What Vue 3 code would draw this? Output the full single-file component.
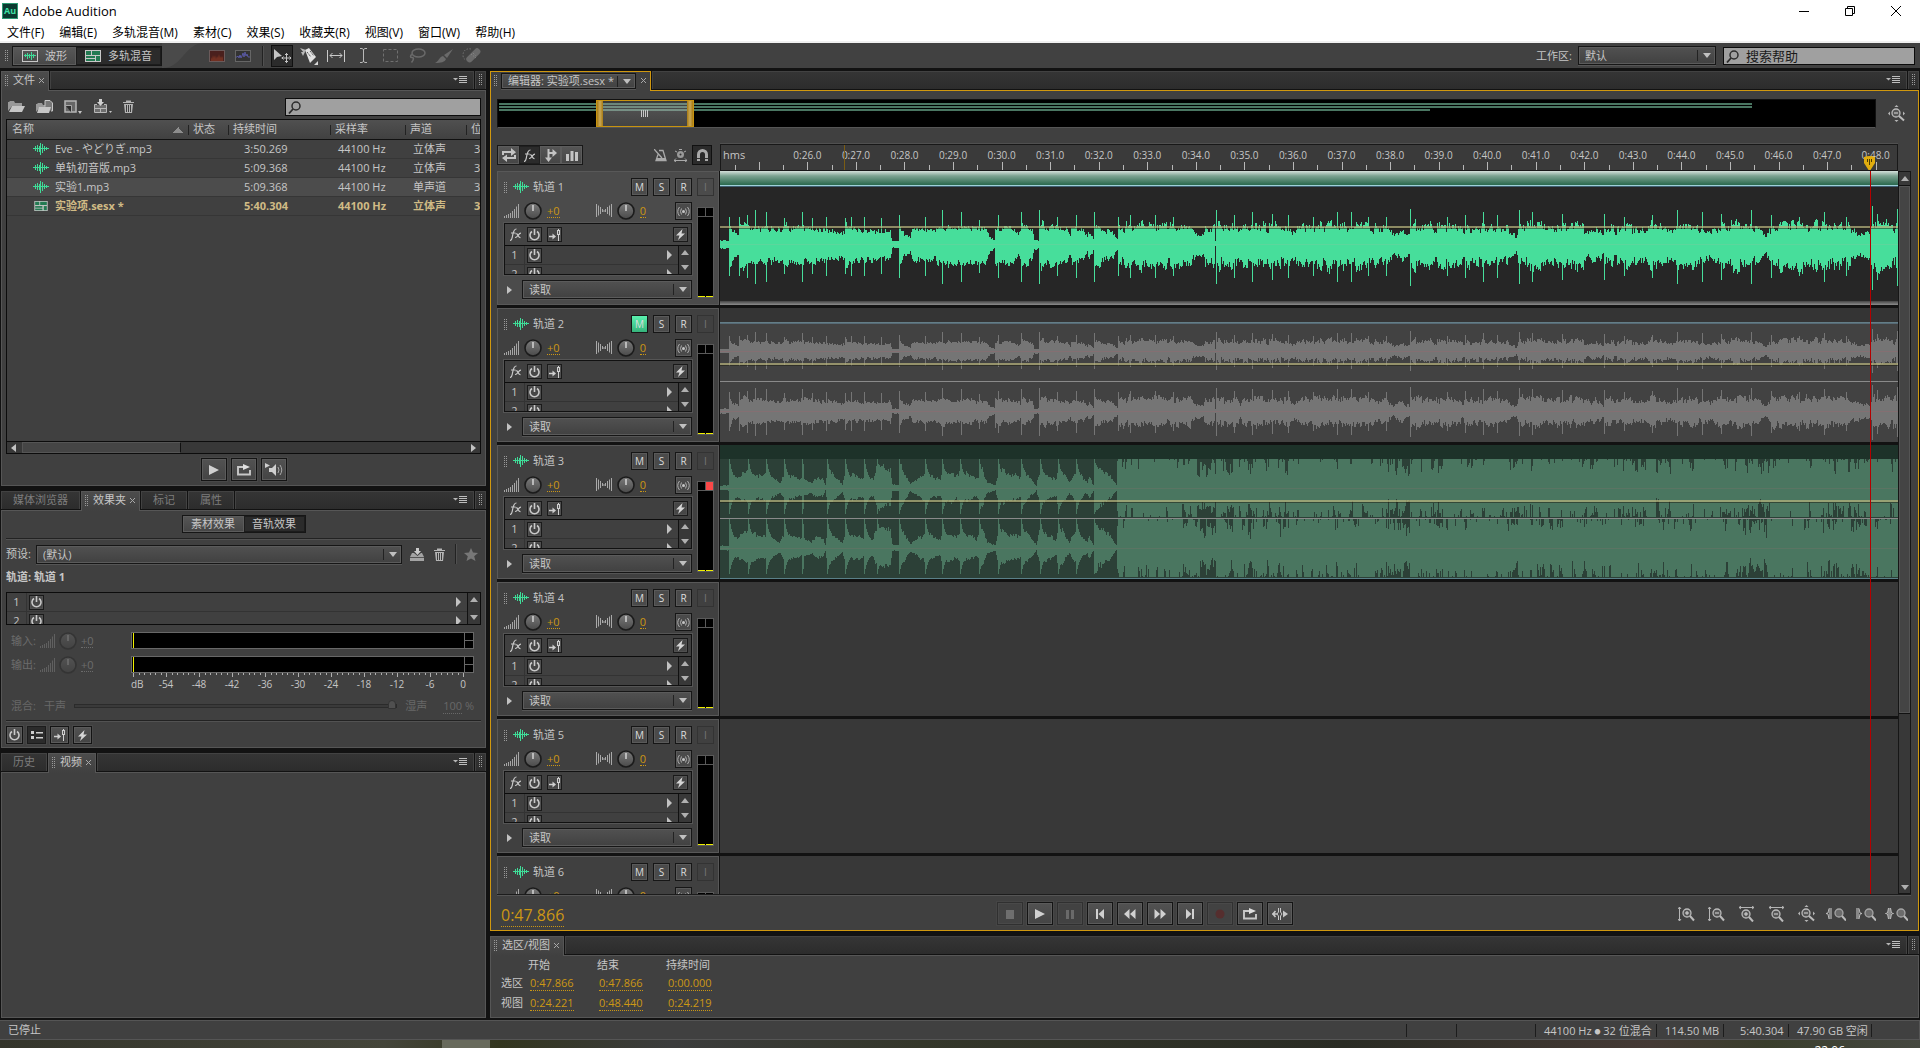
<template>
  <svg class="sprite" aria-hidden="true">
    <symbol id="wave" viewBox="0 0 16 12">
      <path d="M0 5.500h16M2.500 3v5M4.500 2v7M6.500 3v6M7.500 0v12M9.500 1v9M11.500 3v5M13.500 4v3" stroke="#3fdc98" stroke-width="1" fill="none" />
    </symbol>
    <symbol id="wave-box" viewBox="0 0 16 12">
      <rect x=".5" y=".5" width="15" height="11" fill="none" stroke="#c8c8c8" />
      <path d="M2 5.500h12M3.500 4v3M5.500 3v6M7.500 4v4M9.500 2v8M11.500 4v4" stroke="#3fdc98" fill="none" />
    </symbol>
    <symbol id="multi" viewBox="0 0 16 12">
      <rect width="16" height="12" fill="#c8c8c8" />
      <path d="M1 1h5v4H1zM7 1h8v4H7zM1 6h9v2H1zM1 9h9v2H1zM11 6h4v5h-4z" fill="#237a52" />
      <path d="M1 5.500h14M10.500 6v5" stroke="#c8c8c8" />
    </symbol>
    <symbol id="spectral" viewBox="0 0 16 12">
      <rect x=".5" y=".5" width="15" height="11" fill="#4a201d" stroke="#6b5a5a" />
      <path d="M2 11V7l1 2 1-4 1 3 1-3 1 4 1-3 1 2 1-4 1 4 1-2 1 2 1-2v5z" fill="#713022" />
    </symbol>
    <symbol id="pitch" viewBox="0 0 16 12">
      <rect x=".5" y=".5" width="15" height="11" fill="#333" stroke="#666" />
      <path d="M1 7h1l1-1 1 2 1-3 1 3 1-2 1-3 1 4 1-5 1 4 1-2 1 3h2" fill="none" stroke="#5858a0" />
    </symbol>
    <symbol id="move" viewBox="0 0 18 16">
      <path d="M1 1v11l3-3 5-1z" fill="#c4c4c4" />
      <path d="M13.500 5v10M8.500 10h10M12 7l1.500-1.500L15 7M12 13l1.500 1.500L15 13M10.500 8.500L9 10l1.500 1.500M16.500 8.500L18 10l-1.500 1.500" fill="none" stroke="#c4c4c4" />
    </symbol>
    <symbol id="razor" viewBox="0 0 18 18">
      <path d="M5 3l4-2 7 9-6 6z" fill="#e2e2e2" />
      <path d="M0 1l6 2-2 3zM1 5l4 0-2 4z" fill="#b8b8b8" />
      <path d="M7 5l4 5M10 4l4 5" stroke="#555" stroke-dasharray="2 1" />
      <path d="M18 14v4h-4z" fill="#d8d8d8" />
    </symbol>
    <symbol id="timesel" viewBox="0 0 18 12">
      <path d="M.5 0v12M17.500 0v12M3 5.500h12M5.500 3L3 5.500 5.500 8M12.500 3L15 5.500 12.500 8" fill="none" stroke="#cacaca" />
    </symbol>
    <symbol id="ibeam" viewBox="0 0 9 15">
      <path d="M1 .5h2l1.500 1 1.500-1h2M1 14.500h2l1.500-1 1.500 1h2M4.500 1v13" fill="none" stroke="#b8b8b8" />
    </symbol>
    <symbol id="marquee" viewBox="0 0 15 13">
      <rect x=".5" y=".5" width="14" height="12" fill="none" stroke="#707070" stroke-dasharray="3 2" />
    </symbol>
    <symbol id="lasso" viewBox="0 0 17 16">
      <ellipse cx="9.500" cy="5" rx="6.500" ry="4" fill="none" stroke="#6a6a6a" stroke-width="1.500" />
      <path d="M3 6.500c-2 1-2 3 0 3s2 2-.5 5" fill="none" stroke="#6a6a6a" stroke-width="1.500" />
    </symbol>
    <symbol id="brush" viewBox="0 0 18 14">
      <path d="M18 0L9 6l3 3zM8 7l3 3c-1 3-5 4-11 4 4-2 4-6 8-7z" fill="#6a6a6a" />
    </symbol>
    <symbol id="heal" viewBox="0 0 19 17">
      <rect x="8" y="0" width="6.500" height="17" rx="3" transform="rotate(45 11.500 8.500)" fill="#6a6a6a" />
      <path d="M9 7l5 4M11 6l3 3" stroke="#8b8b8b" stroke-dasharray="1 1.500" />
      <path d="M9 2C4 1 1 4 1 8c0 3 1 4 3 5" fill="none" stroke="#6f6f6f" stroke-dasharray="1.500 1.500" />
    </symbol>
    <symbol id="grip" viewBox="0 0 4 11">
      <path d="M.5 0v11M2.500 0v11" stroke="#9a9a9a" stroke-dasharray="1 1" />
    </symbol>
    <symbol id="x" viewBox="0 0 5 5">
      <path d="M0 0l5 5M5 0L0 5" stroke="#a8a8a8" />
    </symbol>
    <symbol id="flyout" viewBox="0 0 14 8">
      <path d="M0 2h5L2.500 4.500z" fill="#b5b5b5" />
      <path d="M6 .5h8M6 2.500h8M6 4.500h8M6 6.500h8" stroke="#bdbdbd" />
    </symbol>
    <symbol id="folder" viewBox="0 0 17 13">
      <path d="M0 11V2h1l1-1h4l1 2h7v3H4z" fill="#999" />
      <path d="M4 6h13l-3 6H1z" fill="#c6c6c6" />
    </symbol>
    <symbol id="folder-doc" viewBox="0 0 17 14">
      <path d="M0 12V4h1l1-1h4l1 2h8v2H4z" fill="#999" />
      <path d="M9 6.500V.5h5L16.500 3v8H15" fill="#777" stroke="#c9c9c9" />
      <path d="M3 7h12l-2 6H1z" fill="#c6c6c6" />
    </symbol>
    <symbol id="newfile" viewBox="0 0 18 14">
      <path d="M1 1h11v11H1z" fill="#666" stroke="#b5b5b5" stroke-width="1.500" />
      <path d="M2 6h5v6z" fill="#2c2c2c" />
      <path d="M2 5.500h5.500V12" fill="none" stroke="#a8a8a8" />
      <path d="M14 11h4l-2 3z" fill="#c4c4c4" />
    </symbol>
    <symbol id="insert" viewBox="0 0 19 15">
      <path d="M2 6h11v8H2z" fill="#6e6e6e" />
      <path d="M4 5.500H1.500v8h12v-8H11M2 9.500h11M7.500 10v4" fill="none" stroke="#b8b8b8" />
      <path d="M6 0h3v3h2L7.500 7 4 3h2z" fill="#d0d0d0" />
      <path d="M16 12h3l-1.500 2z" fill="#c4c4c4" />
    </symbol>
    <symbol id="trash" viewBox="0 0 11 13">
      <path d="M0 3V2h3V.5h5V2h3v1zM1 4h9l-1 9H2z" fill="#b4b4b4" />
      <path d="M3.500 5v7M5.500 5v7M7.500 5v7" stroke="#3c3c3c" />
    </symbol>
    <symbol id="save" viewBox="0 0 14 13">
      <path d="M0 9l2-4h2l3.500 3L11 5h1l2 4v4H0z" fill="#a4a4a4" />
      <path d="M0 9.500h14" stroke="#555" />
      <path d="M6 0h3v3h2L7.500 7 4 3h2z" fill="#cacaca" />
    </symbol>
    <symbol id="star" viewBox="0 0 14 13">
      <path d="M7 0l2 4.500 5 .5-3.800 3.200L11.500 13 7 10.500 2.500 13l1.300-4.800L0 5l5-.5z" fill="#777" />
    </symbol>
    <symbol id="mag" viewBox="0 0 13 13">
      <circle cx="8" cy="5" r="4" fill="none" stroke="#2c2c2c" stroke-width="1.500" />
      <path d="M5 8L1 12.500" stroke="#2c2c2c" stroke-width="1.800" />
    </symbol>
    <symbol id="power" viewBox="0 0 11 12">
      <path d="M3 2.500a4.500 4.500 0 1 0 5 0M5.500 0v6" fill="none" stroke="#c9c9c9" stroke-width="1.600" />
    </symbol>
    <symbol id="route" viewBox="0 0 12 12">
      <path d="M0 7.500h4" stroke="#cfcfcf" stroke-width="1.500" />
      <path d="M3.500 4.500l3.500 3-3.500 3z" fill="#cfcfcf" />
      <path d="M9.500 0v12" stroke="#cfcfcf" />
      <rect x="8.500" y="1.500" width="2" height="4" fill="#555" stroke="#cfcfcf" />
    </symbol>
    <symbol id="bolt" viewBox="0 0 9 11">
      <path d="M6.500 0L0 6.500h3.500L2 11l7-6.500H5.500z" fill="#d6d6d6" />
    </symbol>
    <symbol id="list" viewBox="0 0 12 8">
      <path d="M0 0h3v3H0zM0 5h3v3H0zM5 1h7v1.500H5zM5 6h7v1.500H5z" fill="#cfcfcf" />
    </symbol>
    <symbol id="fx" viewBox="0 0 13 13">
      <path d="M1 12.500c2 0 2-2 2.500-4.500S4.500.8 7.500 1M2 5h4.500" fill="none" stroke="#c9c9c9" stroke-width="1.200" />
      <path d="M6.500 6c3-1.500 2 4 5 3.500M12 5.200C9.500 5 8.500 10 6 9.500" fill="none" stroke="#c9c9c9" stroke-width="1.200" />
    </symbol>
    <symbol id="bars" viewBox="0 0 15 14">
      <path d="M.5 12v2M2.500 11v3M4.500 10v4M6.500 9v5M8.500 7v7M10.500 5v9M12.500 2.500V14M14.500 0v14" stroke="#a5a5a5" />
    </symbol>
    <symbol id="pan" viewBox="0 0 16 14">
      <path d="M.5 0v13M2.500 1.500v10M4.500 3v7M6.500 5v3M8 6v2M9.500 5v3M11.500 3v7M13.500 1.500v10M15.500 0v13" stroke="#a9a9a9" />
    </symbol>
    <symbol id="knob" viewBox="0 0 18 18">
      <circle cx="9" cy="9" r="8" fill="url(#knobfill)" stroke="#1b1b1b" stroke-width="1.600" />
      <path d="M9 3v6" stroke="#eee" stroke-width="1.200" />
    </symbol>
    <linearGradient id="knobfill" x1="0" y1="0" x2="0" y2="1">
      <stop offset="0" stop-color="#7b7b7b" />
      <stop offset="1" stop-color="#4a4a4a" />
    </linearGradient>
    <symbol id="monitor" viewBox="0 0 13 11">
      <circle cx="6.500" cy="5.500" r="1.500" fill="#c4c4c4" />
      <path d="M4.500 2.500Q2.500 5.500 4.500 8.500M8.500 2.500q2 3 0 6M2.500 1q-3.500 4.500 0 9M10.500 1q3.500 4.500 0 9" fill="none" stroke="#b0b0b0" />
    </symbol>
    <symbol id="swap" viewBox="0 0 14 14">
      <path d="M0 3h9V0l5 4.200L9 8V5H2v2H0zM14 11H5v3L0 10l5-3.500V9h7V7h2z" fill="#c4c4c4" />
    </symbol>
    <symbol id="branch" viewBox="0 0 12 13">
      <path d="M3.500 0v10M3.500 4H8" stroke="#c4c4c4" stroke-width="2" />
      <path d="M0 8.500h7L3.500 13zM7.500 0v8L12 4z" fill="#c4c4c4" />
    </symbol>
    <symbol id="eq" viewBox="0 0 12 11">
      <path d="M0 4h3v7H0zM4.500 1h3v10h-3zM9 2h3v9H9z" fill="#c4c4c4" />
    </symbol>
    <symbol id="metro" viewBox="0 0 13 13">
      <path d="M5 1.500h4l3 10H2l2-6M0 0l8 9" fill="none" stroke="#a9a9a9" stroke-width="1.300" />
      <path d="M3 9h8v3H2z" fill="#a9a9a9" />
    </symbol>
    <symbol id="timer" viewBox="0 0 13 13">
      <circle cx="6.500" cy="5.500" r="3.500" fill="#999" />
      <circle cx="6.500" cy="5.500" r="1" fill="#333" />
      <path d="M5 .5h3M1 2l2 1M12 2l-2 1M0 11.500h13M2 9.500l-2 2 2 1.500M11 9.500l2 2-2 1.500" fill="none" stroke="#a9a9a9" />
    </symbol>
    <symbol id="magnet" viewBox="0 0 11 12">
      <path d="M1.500 12V5.500a4 4 0 0 1 8 0V12" fill="none" stroke="#aaa" stroke-width="3" />
      <path d="M0 9.500h3M8 9.500h3" stroke="#333" />
    </symbol>
    <symbol id="play" viewBox="0 0 10 10"><path d="M0 0l10 5-10 5z" fill="#d0d0d0" /></symbol>
    <symbol id="stop" viewBox="0 0 10 10"><path d="M1 1h8v9H1z" fill="#6e6e6e" /></symbol>
    <symbol id="pause" viewBox="0 0 10 10"><path d="M1 1h3v9H1zM6 1h3v9H6z" fill="#6a6a6a" /></symbol>
    <symbol id="prev" viewBox="0 0 10 10"><path d="M1 0h2v10H1zM9 0v10L3.500 5z" fill="#d0d0d0" /></symbol>
    <symbol id="rew" viewBox="0 0 12 10"><path d="M5.500 0v10L0 5zM11.500 0v10L6 5z" fill="#d0d0d0" /></symbol>
    <symbol id="fwd" viewBox="0 0 12 10"><path d="M.5 0v10L6 5zM6.500 0v10L12 5z" fill="#d0d0d0" /></symbol>
    <symbol id="next" viewBox="0 0 10 10"><path d="M7 0h2v10H7zM1 0v10l5.500-5z" fill="#d0d0d0" /></symbol>
    <symbol id="rec" viewBox="0 0 10 10"><circle cx="5" cy="5" r="4.500" fill="#552e2e" /></symbol>
    <symbol id="loop" viewBox="0 0 14 12">
      <path d="M7 3H1v7.500h12V6" fill="none" stroke="#c8c8c8" stroke-width="1.900" />
      <path d="M6 0l7 3-7 3z" fill="#e0e0e0" />
    </symbol>
    <symbol id="skip" viewBox="0 0 16 12">
      <path d="M3.500 3L1 6l2.500 3M0 6h5M11 6h3" fill="none" stroke="#c8c8c8" stroke-width="1.600" />
      <path d="M11 2.500v7L16 6z" fill="#c8c8c8" />
      <path d="M6.500 0v4L5 6l1.500 2v4M8.500 0v4L10 6 8.500 8v4" fill="none" stroke="#c8c8c8" />
    </symbol>
    <symbol id="speaker" viewBox="0 0 18 14">
      <path d="M0 0l5 2.500L0 5zM4 5h3l4-4v12L7 9H4z" fill="#cfcfcf" />
      <path d="M13 4q2 3 0 6M15 2q3.500 5 0 10" fill="none" stroke="#aaa" />
    </symbol>
    <symbol id="zin-v" viewBox="0 0 17 16">
      <path d="M1.500 1v14M0 3l1.500-2L3 3M0 13l1.500 2L3 13" fill="none" stroke="#b5b5b5" />
      <circle cx="9" cy="7" r="4" fill="#555" stroke="#bababa" stroke-width="1.300" />
      <path d="M7 7h4M9 5v4" stroke="#ddd" /><path d="M12 10l4 4.500" stroke="#bababa" stroke-width="2" />
    </symbol>
    <symbol id="zout-v" viewBox="0 0 17 16">
      <path d="M1.500 1v14M0 3l1.500-2L3 3M0 13l1.500 2L3 13" fill="none" stroke="#b5b5b5" />
      <circle cx="9" cy="7" r="4" fill="#555" stroke="#bababa" stroke-width="1.300" />
      <path d="M7 7h4" stroke="#ddd" /><path d="M12 10l4 4.500" stroke="#bababa" stroke-width="2" />
    </symbol>
    <symbol id="zin-h" viewBox="0 0 17 16">
      <path d="M1 1.500h15M3 0L1 1.500 3 3M14 0l2 1.500L14 3" fill="none" stroke="#b5b5b5" />
      <circle cx="8" cy="8" r="4" fill="#555" stroke="#bababa" stroke-width="1.300" />
      <path d="M6 8h4M8 6v4" stroke="#ddd" /><path d="M11 11l4 4.500" stroke="#bababa" stroke-width="2" />
    </symbol>
    <symbol id="zout-h" viewBox="0 0 17 16">
      <path d="M1 1.500h15M3 0L1 1.500 3 3M14 0l2 1.500L14 3" fill="none" stroke="#b5b5b5" />
      <circle cx="8" cy="8" r="4" fill="#555" stroke="#bababa" stroke-width="1.300" />
      <path d="M6 8h4" stroke="#ddd" /><path d="M11 11l4 4.500" stroke="#bababa" stroke-width="2" />
    </symbol>
    <symbol id="zfull" viewBox="0 0 17 17">
      <path d="M6.500 2h4L8.500 0zM6.500 15h4l-2 2zM2 6.500v4L0 8.500zM15 6.500v4l2-2z" fill="#b5b5b5" />
      <circle cx="8" cy="8" r="4" fill="#555" stroke="#bababa" stroke-width="1.300" />
      <path d="M6 8h4" stroke="#ddd" /><path d="M11 11l5 4.500" stroke="#bababa" stroke-width="2" />
    </symbol>
    <symbol id="zsel-in" viewBox="0 0 20 14">
      <path d="M3 1h3v11H3z" fill="#888" /><path d="M3 1.500L2 6l-2 .5L2 7l1 5" fill="none" stroke="#bababa" />
      <circle cx="13" cy="6" r="4" fill="#6c6c6c" stroke="#a5a5a5" stroke-width="1.300" /><path d="M16 9l4 4.500" stroke="#bababa" stroke-width="2" />
    </symbol>
    <symbol id="zsel-out" viewBox="0 0 20 14">
      <path d="M0 1h3v11H0z" fill="#888" /><path d="M3 1.500L4 6l2 .5L4 7l-1 5" fill="none" stroke="#bababa" />
      <circle cx="13" cy="6" r="4" fill="#6c6c6c" stroke="#a5a5a5" stroke-width="1.300" /><path d="M16 9l4 4.500" stroke="#bababa" stroke-width="2" />
    </symbol>
    <symbol id="zsel" viewBox="0 0 23 14">
      <path d="M3 1h3v11H3z" fill="#888" /><path d="M3.500 1L2.500 6l-2 .5 2 .5 1 5M5.500 1l1 5 2 .5-2 .5-1 5" fill="none" stroke="#bababa" />
      <circle cx="16" cy="6" r="4" fill="#6c6c6c" stroke="#a5a5a5" stroke-width="1.300" /><path d="M19 9l4 4.500" stroke="#bababa" stroke-width="2" />
    </symbol>
  </svg>

  <div class="app">
    <header class="titlebar">
      <span class="logo">Au</span>
      <span class="app-name">Adobe Audition</span>
      <div class="window-buttons">
        <button aria-label="最小化"><svg width="10" height="10"><path d="M0 5.500h10" stroke="#000" /></svg></button>
        <button aria-label="还原"><svg width="10" height="10"><path d="M.5 2.500h7v7h-7zM2.500 2V.5h7v7H8" fill="none" stroke="#000" /></svg></button>
        <button aria-label="关闭"><svg width="10" height="10"><path d="M0 0l10 10M10 0L0 10" stroke="#000" /></svg></button>
      </div>
    </header>
    <nav class="menubar">
      <button v-for="item in menus" :key="item">{{ item }}</button>
    </nav>

    <div class="toolbar">
      <svg class="grip"><use href="#grip" /></svg>
      <div class="view-switch">
        <button><svg width="16" height="12"><use href="#wave-box" /></svg>波形</button>
        <button class="pressed"><svg width="16" height="12"><use href="#multi" /></svg>多轨混音</button>
      </div>
      <svg class="swoosh" viewBox="0 0 40 25" preserveAspectRatio="none"><path d="M0 0h40C20 0 20 25 0 25z" fill="#4a4a4a" /></svg>
      <div class="tools dim">
        <button aria-label="频谱"><svg width="16" height="12"><use href="#spectral" /></svg></button>
        <button aria-label="音高"><svg width="16" height="12"><use href="#pitch" /></svg></button>
      </div>
      <i class="vline"></i>
      <div class="tools">
        <button class="pressed" aria-label="移动工具"><svg width="18" height="16"><use href="#move" /></svg></button>
        <button v-for="tool in tools" :key="tool.icon" :aria-label="tool.label"><svg :width="tool.w" :height="tool.h"><use :href="'#' + tool.icon" /></svg></button>
      </div>
      <label class="workspace-label" for="workspace">工作区:</label>
      <div class="select workspace"><select id="workspace"><option>默认</option></select></div>
      <div class="search help">
        <svg width="13" height="13"><use href="#mag" /></svg>
        <input type="text" placeholder="搜索帮助" aria-label="搜索帮助" />
      </div>
    </div>

    <main class="workspace-grid">
      <div class="column">
        <section class="panel files">
          <div class="tabs">
            <button class="tab active"><svg class="grip"><use href="#grip" /></svg>文件<svg class="close"><use href="#x" /></svg></button>
            <div class="strip"><svg width="14" height="8"><use href="#flyout" /></svg></div>
            <div class="strip-end"><svg class="grip"><use href="#grip" /></svg></div>
          </div>
          <div class="body">
            <div class="file-tools">
              <button v-for="tool in fileTools" :key="tool.icon" :aria-label="tool.label"><svg :width="tool.w" :height="tool.h"><use :href="'#' + tool.icon" /></svg></button>
              <div class="search">
                <svg width="13" height="13"><use href="#mag" /></svg>
                <input type="text" aria-label="搜索文件" />
              </div>
            </div>
            <div class="file-box">
              <table>
                <colgroup><col class="c-name" /><col class="c-state" /><col class="c-time" /><col class="c-rate" /><col class="c-chan" /><col /></colgroup>
                <thead>
                  <tr><th class="sorted">名称</th><th>状态</th><th>持续时间</th><th>采样率</th><th>声道</th><th>位</th></tr>
                </thead>
                <tbody>
                  <tr v-for="file in files" :key="file.name" :class="{ selected: file.selected, project: file.project }">
                    <td><svg :width="file.project ? 14 : 16" :height="file.project ? 10 : 12"><use :href="file.project ? '#multi' : '#wave'" /></svg>{{ file.name }}</td>
                    <td></td>
                    <td>{{ file.time }}</td>
                    <td>44100 Hz</td>
                    <td>{{ file.channels }}</td>
                    <td>32</td>
                  </tr>
                </tbody>
              </table>
            </div>
            <div class="hscroll"><i class="tri left"></i><div class="rail"><div class="thumb"></div></div><i class="tri right"></i></div>
            <div class="preview">
              <button class="btn" aria-label="播放"><svg width="10" height="10"><use href="#play" /></svg></button>
              <button class="btn" aria-label="循环"><svg width="14" height="12"><use href="#loop" /></svg></button>
              <button class="btn" aria-label="自动播放"><svg width="18" height="14"><use href="#speaker" /></svg></button>
            </div>
          </div>
        </section>

        <section class="panel rack">
          <div class="tabs">
            <button class="tab">媒体浏览器</button>
            <button class="tab active"><svg class="grip"><use href="#grip" /></svg>效果夹<svg class="close"><use href="#x" /></svg></button>
            <button class="tab">标记</button>
            <button class="tab">属性</button>
            <div class="strip"><svg width="14" height="8"><use href="#flyout" /></svg></div>
            <div class="strip-end"><svg class="grip"><use href="#grip" /></svg></div>
          </div>
          <div class="body">
            <div class="switch"><button>素材效果</button><button class="pressed">音轨效果</button></div>
            <hr />
            <div class="preset">
              <label for="preset">预设:</label>
              <div class="select"><select id="preset"><option>(默认)</option></select></div>
              <button aria-label="保存预设"><svg width="14" height="13"><use href="#save" /></svg></button>
              <button aria-label="删除预设"><svg width="11" height="13"><use href="#trash" /></svg></button>
              <i class="vline"></i>
              <button aria-label="收藏"><svg width="14" height="13"><use href="#star" /></svg></button>
            </div>
            <div class="rack-track">轨道: 轨道 1</div>
            <div class="slots">
              <div class="slot-rows">
                <div class="slot" v-for="n in 2" :key="n"><span>{{ n }}</span><button class="mini" aria-label="开关"><svg width="11" height="12"><use href="#power" /></svg></button><i class="tri right"></i></div>
              </div>
              <div class="vscroll"><i class="tri up"></i><i class="tri down"></i></div>
            </div>
            <div class="level" v-for="label in ['输入:', '输出:']" :key="label">
              <div class="faded">
                <span>{{ label }}</span>
                <svg width="15" height="14"><use href="#bars" /></svg>
                <svg width="18" height="18"><use href="#knob" /></svg>
                <span class="dotted">+0</span>
              </div>
              <div class="meter"><i></i><b></b></div>
            </div>
            <div class="db-scale">
              <i v-for="n in 61" :key="n" :class="{ major: (n - 1) % 6 === 0 }" :style="{ left: (n - 1) / 0.6 + '%' }"></i>
              <span v-for="(db, n) in dbLabels" :key="db" :style="{ left: n * 10 + '%' }">{{ db }}</span>
            </div>
            <div class="mix">
              <label for="mix">混合:</label><span>干声</span>
              <input id="mix" type="range" min="0" max="100" value="100" disabled />
              <span>湿声</span><span class="percent"><u>100</u> %</span>
            </div>
            <hr />
            <div class="rack-buttons">
              <button class="btn" aria-label="电源"><svg width="11" height="12"><use href="#power" /></svg></button>
              <button class="btn pressed" aria-label="列表"><svg width="12" height="8"><use href="#list" /></svg></button>
              <button class="btn" aria-label="推子"><svg width="12" height="12"><use href="#route" /></svg></button>
              <button class="btn" aria-label="预渲染"><svg width="9" height="11"><use href="#bolt" /></svg></button>
            </div>
          </div>
        </section>

        <section class="panel history">
          <div class="tabs">
            <button class="tab">历史</button>
            <button class="tab active"><svg class="grip"><use href="#grip" /></svg>视频<svg class="close"><use href="#x" /></svg></button>
            <div class="strip"><svg width="14" height="8"><use href="#flyout" /></svg></div>
            <div class="strip-end"><svg class="grip"><use href="#grip" /></svg></div>
          </div>
          <div class="body"></div>
        </section>
      </div>

      <div class="column">
        <section class="panel editor">
          <div class="tabs">
            <div class="tab active">
              <svg class="grip"><use href="#grip" /></svg>
              <div class="select"><select aria-label="编辑器"><option>编辑器: 实验项.sesx *</option></select></div>
              <svg class="close"><use href="#x" /></svg>
            </div>
            <div class="strip"><svg width="14" height="8"><use href="#flyout" /></svg></div>
            <div class="strip-end"><svg class="grip"><use href="#grip" /></svg></div>
          </div>
          <div class="body">
            <div class="overview-row">
              <div class="overview">
                <i class="clip-line" v-for="(w, n) in overviewClips" :key="n" :style="{ width: w + '%' }"></i>
                <div class="view-window"><i></i><span></span><i></i></div>
              </div>
              <button aria-label="全部缩小"><svg width="17" height="17"><use href="#zfull" /></svg></button>
            </div>

            <div class="time-row">
              <div class="track-tools">
                <div class="joined">
                  <button aria-label="输入输出"><svg width="14" height="14"><use href="#swap" /></svg></button>
                  <button class="pressed" aria-label="效果"><svg width="13" height="13"><use href="#fx" /></svg></button>
                  <button aria-label="发送"><svg width="12" height="13"><use href="#branch" /></svg></button>
                  <button aria-label="均衡"><svg width="12" height="11"><use href="#eq" /></svg></button>
                </div>
                <button class="plain" aria-label="节拍器"><svg width="13" height="13"><use href="#metro" /></svg></button>
                <button class="plain" aria-label="计时"><svg width="13" height="13"><use href="#timer" /></svg></button>
                <button class="plain pressed" aria-label="吸附"><svg width="11" height="12"><use href="#magnet" /></svg></button>
              </div>
              <div class="ruler">
                <span class="unit">hms</span>
                <template v-for="tick in ticks" :key="tick.t">
                  <i :class="{ major: tick.major }" :style="{ left: tick.left + '%' }"></i>
                  <span v-if="tick.label" :style="{ left: tick.left + '%' }">{{ tick.label }}</span>
                </template>
                <b class="hover-mark"></b>
                <svg class="marker" viewBox="0 0 11 14"><path d="M0 1q5.500-2 11 0v6l-4.500 7h-2L0 7z" fill="#e0ac0e" /><path d="M3.500 3v3M5.500 3v6M7.500 3v3" stroke="#4a3a00" /></svg>
              </div>
            </div>

            <div class="session">
              <div class="tracks">
                <div class="track" v-for="track in tracks" :key="track.id" :class="{ current: track.id === 1 }">
                  <div class="head">
                    <div class="controls">
                      <div class="line title">
                        <svg class="grip"><use href="#grip" /></svg>
                        <svg width="16" height="12"><use href="#wave" /></svg>
                        <span class="name">轨道 {{ track.id }}</span>
                        <button class="key" :class="{ muted: track.muted }">M</button>
                        <button class="key">S</button>
                        <button class="key">R</button>
                      </div>
                      <div class="line dials">
                        <svg width="15" height="14"><use href="#bars" /></svg>
                        <svg width="18" height="18"><use href="#knob" /></svg>
                        <span class="value volume">+0</span>
                        <svg width="16" height="14"><use href="#pan" /></svg>
                        <svg width="18" height="18"><use href="#knob" /></svg>
                        <span class="value">0</span>
                        <button class="key" aria-label="监听"><svg width="13" height="11"><use href="#monitor" /></svg></button>
                      </div>
                      <div class="fx-box">
                        <div class="fx-row">
                          <svg width="13" height="13"><use href="#fx" /></svg>
                          <button class="mini" aria-label="开关"><svg width="11" height="12"><use href="#power" /></svg></button>
                          <button class="mini" aria-label="推子"><svg width="12" height="12"><use href="#route" /></svg></button>
                          <button class="mini last" aria-label="预渲染"><svg width="9" height="11"><use href="#bolt" /></svg></button>
                        </div>
                        <div class="slots">
                          <div class="slot-rows">
                            <div class="slot" v-for="n in 2" :key="n"><span>{{ n }}</span><button class="mini" aria-label="开关"><svg width="11" height="12"><use href="#power" /></svg></button><i class="tri right"></i></div>
                          </div>
                          <div class="vscroll"><i class="tri up"></i><i class="tri down"></i></div>
                        </div>
                      </div>
                      <div class="line mode">
                        <i class="tri right"></i>
                        <div class="select"><select :aria-label="'轨道 ' + track.id + ' 自动化'"><option>读取</option></select></div>
                      </div>
                    </div>
                    <div class="side">
                      <button class="key off">I</button>
                      <div class="vu"><div class="clip-leds"><i></i><i :class="{ hot: track.clipped }"></i></div><div class="floor"><i></i><i></i></div></div>
                    </div>
                  </div>
                  <div class="lane" :class="track.kind">
                    <svg v-if="track.waves" viewBox="0 0 1178 134" preserveAspectRatio="none" shape-rendering="crispEdges">
                      <g v-for="(wave, n) in track.waves" :key="n">
                        <path :d="wave.d" :fill="track.color" />
                        <path :d="`M0 ${wave.mid}.5H1178`" :stroke="track.axis" />
                      </g>
                      <path v-if="track.split" :d="`M0 ${track.split}.5H1178`" stroke="#8a8a8a" />
                      <rect x="0" :y="track.volume" width="1178" height="2" fill="#b5b27b" fill-opacity=".72" />
                      <rect x="0" :y="track.volume + 2" width="1178" height="1" fill="#1c1c10" fill-opacity=".5" />
                    </svg>
                  </div>
                </div>
                <div class="playhead-area"><i></i></div>
              </div>
              <div class="track-scroll"><i class="tri up"></i><div class="thumb"></div><div class="rest"></div><i class="tri down"></i></div>
            </div>

            <div class="footer">
              <div class="clock"><span>0:47.866</span></div>
              <div class="transport">
                <button v-for="b in transport" :key="b.icon" class="btn" :disabled="b.off" :aria-label="b.label"><svg :width="b.w" :height="b.h"><use :href="'#' + b.icon" /></svg></button>
              </div>
              <div class="zooms">
                <button v-for="z in zooms" :key="z.icon" :aria-label="z.label"><svg :width="z.w" :height="z.h"><use :href="'#' + z.icon" /></svg></button>
              </div>
            </div>
          </div>
        </section>

        <section class="panel selection">
          <div class="tabs">
            <button class="tab active"><svg class="grip"><use href="#grip" /></svg>选区/视图<svg class="close"><use href="#x" /></svg></button>
            <div class="strip"><svg width="14" height="8"><use href="#flyout" /></svg></div>
            <div class="strip-end"><svg class="grip"><use href="#grip" /></svg></div>
          </div>
          <div class="body">
            <table>
              <thead><tr><th></th><th>开始</th><th>结束</th><th>持续时间</th></tr></thead>
              <tbody>
                <tr v-for="row in ranges" :key="row.label">
                  <th>{{ row.label }}</th>
                  <td v-for="(v, n) in row.values" :key="n"><span>{{ v }}</span></td>
                </tr>
              </tbody>
            </table>
          </div>
        </section>
      </div>
    </main>

    <footer class="statusbar">
      <span class="state">已停止</span>
      <span class="cell gap-a"></span>
      <span class="cell gap-b"></span>
      <span class="cell rate">44100 Hz <small>●</small> 32 位混合</span>
      <span class="cell size">114.50 MB</span>
      <span class="cell length">5:40.304</span>
      <span class="cell free">47.90 GB 空闲</span>
      <span class="cell tail"></span>
    </footer>
    <div class="taskbar"><i class="task"></i><span>22:06</span></div>
  </div>
</template>

<script setup>
const menus = ['文件(F)', '编辑(E)', '多轨混音(M)', '素材(C)', '效果(S)', '收藏夹(R)', '视图(V)', '窗口(W)', '帮助(H)']

const tools = [
  { icon: 'razor', label: '切割', w: 18, h: 18 },
  { icon: 'timesel', label: '时间选区', w: 18, h: 12 },
  { icon: 'ibeam', label: '选区', w: 9, h: 15 },
  { icon: 'marquee', label: '框选', w: 15, h: 13 },
  { icon: 'lasso', label: '套索', w: 17, h: 16 },
  { icon: 'brush', label: '画笔', w: 18, h: 14 },
  { icon: 'heal', label: '修复', w: 19, h: 17 }
]

const fileTools = [
  { icon: 'folder', label: '打开', w: 17, h: 13 },
  { icon: 'folder-doc', label: '导入', w: 17, h: 14 },
  { icon: 'newfile', label: '新建', w: 18, h: 14 },
  { icon: 'insert', label: '插入', w: 19, h: 15 },
  { icon: 'trash', label: '删除', w: 11, h: 13 }
]

const files = [
  { name: 'Eve - やどりぎ.mp3', time: '3:50.269', channels: '立体声' },
  { name: '单轨初音版.mp3', time: '5:09.368', channels: '立体声' },
  { name: '实验1.mp3', time: '5:09.368', channels: '单声道', selected: true },
  { name: '实验项.sesx *', time: '5:40.304', channels: '立体声', project: true }
]

const dbLabels = ['dB', '-54', '-48', '-42', '-36', '-30', '-24', '-18', '-12', '-6', '0']

const overviewClips = [91.1, 91.1, 67.7]

const transport = [
  { icon: 'stop', label: '停止', w: 10, h: 10, off: true },
  { icon: 'play', label: '播放', w: 10, h: 10 },
  { icon: 'pause', label: '暂停', w: 10, h: 10, off: true },
  { icon: 'prev', label: '上一个', w: 10, h: 10 },
  { icon: 'rew', label: '快退', w: 12, h: 10 },
  { icon: 'fwd', label: '快进', w: 12, h: 10 },
  { icon: 'next', label: '下一个', w: 10, h: 10 },
  { icon: 'rec', label: '录音', w: 10, h: 10, off: true },
  { icon: 'loop', label: '循环', w: 14, h: 12 },
  { icon: 'skip', label: '跳过选区', w: 16, h: 12 }
]

const zooms = [
  { icon: 'zin-v', label: '放大振幅', w: 17, h: 16 },
  { icon: 'zout-v', label: '缩小振幅', w: 17, h: 16 },
  { icon: 'zin-h', label: '放大时间', w: 17, h: 16 },
  { icon: 'zout-h', label: '缩小时间', w: 17, h: 16 },
  { icon: 'zfull', label: '完全缩小', w: 17, h: 17 },
  { icon: 'zsel-in', label: '放大入点', w: 20, h: 14 },
  { icon: 'zsel-out', label: '放大出点', w: 20, h: 14 },
  { icon: 'zsel', label: '缩放到选区', w: 23, h: 14 }
]

const ranges = [
  { label: '选区', values: ['0:47.866', '0:47.866', '0:00.000'] },
  { label: '视图', values: ['0:24.221', '0:48.440', '0:24.219'] }
]

// visible time range, in seconds
const viewStart = 24.221
const viewLength = 24.219

const ticks = []
for (let t = 25; t <= 48; t++) {
  ticks.push({ t, major: true, left: ((t - viewStart) / viewLength) * 100, label: t > 25 ? `0:${t}.0` : '' })
}
for (let t = 24.5; t < 48.4; t++) {
  ticks.push({ t, major: false, left: ((t - viewStart) / viewLength) * 100 })
}

// loudness curve of the song: [x, level]
const song = [
  [0, 0.2], [8, 0.22], [9, 1.2], [12, 0.8], [18, 0.55], [19, 1.2], [40, 1.05], [52, 0.9], [60, 0.9], [64, 1.1], [80, 1.05],
  [92, 1], [105, 0.9], [118, 0.85], [124, 0.7], [125, 1.1], [130, 0.95], [150, 0.85], [160, 0.75], [170, 0.9], [172, 0.22],
  [178, 0.22], [179, 1.3], [184, 0.7], [190, 0.45], [192, 0.95], [215, 0.85], [222, 1.1], [250, 0.95], [267, 0.9], [270, 0.4],
  [274, 0.25], [275, 1.15], [290, 0.95], [300, 0.75], [301, 1.2], [312, 0.9], [314, 0.25], [318, 0.22], [319, 1.25],
  [335, 1.05], [348, 0.9], [350, 0.7], [352, 1.1], [363, 0.9], [367, 0.4], [369, 0.9], [373, 0.3], [374, 1.2], [385, 0.9],
  [393, 0.8], [397, 0.35], [398, 1.2], [470, 1.1], [475, 0.6], [483, 0.5], [485, 1.1], [494, 1], [495, 0.2], [496, 1.15],
  [517, 1], [520, 0.7], [523, 1.1], [555, 1.1], [557, 0.85], [560, 1.1], [568, 1], [574, 0.75], [585, 1.15], [625, 1.15],
  [628, 0.85], [631, 1.2], [664, 1], [674, 0.5], [680, 0.85], [689, 0.5], [690, 1.2], [738, 1.1], [743, 0.8], [748, 1.1],
  [787, 1], [790, 0.65], [796, 0.5], [799, 1.2], [838, 1.1], [840, 0.85], [843, 1.2], [862, 1.1], [870, 0.75], [875, 1],
  [883, 0.5], [884, 1.15], [900, 0.85], [905, 1.1], [925, 0.8], [932, 1.2], [945, 1], [952, 0.75], [957, 1.2], [990, 0.9],
  [1000, 1.2], [1020, 1.2], [1035, 1], [1046, 0.5], [1051, 1.2], [1110, 1.15], [1130, 1], [1140, 0.6], [1150, 0.75], [1152, 1.3], [1178, 1.1]
]
const songHits = [
  [9, 1.7], [19, 1.7], [27, 1.8], [35, 2.1], [46, 2], [64, 1.6], [82, 2], [92, 1.6], [106, 1.7], [125, 1.6], [131, 1.7], [144, 1.7],
  [161, 1.6], [179, 1.8], [205, 1.7], [222, 2.1], [241, 2], [259, 1.5], [278, 1.8], [301, 2], [319, 2.1], [337, 1.7], [356, 1.8],
  [374, 2], [398, 1.7], [410, 1.8], [435, 1.8], [453, 1.7], [496, 2.1], [514, 1.8], [532, 2], [552, 1.9], [568, 1.8], [593, 1.7],
  [617, 2], [631, 2], [648, 1.7], [666, 1.7], [690, 2.2], [727, 1.7], [745, 1.8], [763, 2], [777, 1.8], [799, 2.1], [812, 2],
  [842, 1.9], [884, 1.9], [904, 1.7], [932, 1.8], [957, 2.1], [982, 2], [1001, 1.9], [1031, 2.1], [1051, 1.8], [1079, 1.7],
  [1104, 2], [1126, 1.7], [1152, 2.4], [1157, 1.9], [1177, 2.2]
]

// backing track: long decays first, then saturated
const backing = [
  [0, 0.08], [8, 0.1], [9, 0.55], [18, 0.4], [28, 0.65], [42, 0.35], [46, 0.5], [60, 0.2], [64, 0.5], [78, 0.35], [88, 0.25],
  [91, 0.2], [98, 0.4], [103, 0.3], [105, 0.1], [107, 0.7], [122, 0.15], [125, 0.5], [140, 0.4], [153, 0.3], [157, 0.8],
  [170, 0.6], [172, 0.12], [178, 0.1], [179, 0.8], [190, 0.15], [205, 0.5], [220, 0.3], [222, 0.65], [238, 0.4], [240, 0.6],
  [256, 0.3], [262, 0.7], [267, 0.2], [275, 0.1], [278, 0.6], [300, 0.4], [301, 0.75], [316, 0.1], [319, 0.6], [336, 0.3],
  [338, 0.8], [349, 0.2], [356, 0.6], [367, 0.2], [369, 0.4], [373, 0.1], [374, 0.9], [390, 0.4], [396, 0.1], [398, 1.5],
  [460, 1.4], [464, 0.95], [475, 1.1], [483, 0.7], [494, 0.8], [495, 0.4], [496, 1.5], [512, 0.8], [515, 1.5], [530, 0.7],
  [532, 1.3], [568, 1], [569, 1.5], [665, 1.3], [674, 0.8], [680, 1], [689, 0.5], [690, 1.5], [720, 1.2], [760, 1.5], [789, 1.3], [797, 0.7],
  [799, 1.5], [830, 1.2], [850, 1.5], [872, 1], [884, 1.5], [920, 1.2], [952, 1], [957, 1.5], [1000, 1.2], [1046, 0.8], [1051, 1.5],
  [1100, 1.3], [1140, 0.9], [1152, 1.5], [1178, 1.3]
]
const backingHits = [9, 28, 46, 64, 82, 107, 125, 144, 157, 179, 205, 222, 240, 259, 278, 301, 320, 338, 356, 374].map((x) => [x, 1])

function random(n) {
  const v = Math.sin(n * 127.1 + 11.7) * 43758.5453
  return v - Math.floor(v)
}

function levelAt(points, x) {
  let i = 1
  while (i < points.length - 1 && points[i][0] < x) i++
  const [x0, y0] = points[i - 1]
  const [x1, y1] = points[i]
  return y0 + ((y1 - y0) * (x - x0)) / (x1 - x0)
}

function buildWave({ points, hits, mid, up, down, limit, seed, fade, rough, lateRough }) {
  let d = ''
  for (let x = 0; x < 1178; x++) {
    const base = levelAt(points, x)
    const noise = x < 398 ? rough : lateRough
    let hit = 0
    for (const [at, size] of hits) {
      if (x >= at && x < at + 20) hit = Math.max(hit, size * Math.exp((at - x) / fade))
    }
    const slow = random(Math.floor(x / 3) + seed * 7) - 0.5
    const size = (n) => Math.max(base * (1 + noise * (random(x * 2 + n + seed) - 0.6 + slow)), base < 0.3 ? 0 : hit)
    const top = Math.min(limit, Math.max(2, Math.round(size(0) * up)))
    const bottom = Math.min(limit, Math.max(2, Math.round(size(1) * down)))
    d += `M${x} ${mid - top}h1v${top + bottom}h-1z`
  }
  return { d, mid }
}

const vocal = { points: song, hits: songHits, limit: 60, fade: 1.2, rough: 0.3, lateRough: 0.4 }
const band = { points: backing, hits: backingHits, up: 29, down: 26, limit: 29, fade: 5, rough: 0.25, lateRough: 0.6 }

const tracks = [
  {
    id: 1, kind: 'active', color: '#47de9b', axis: '#5cd69c', volume: 55,
    waves: [buildWave({ ...vocal, mid: 73, up: 16, down: 19, seed: 1 })]
  },
  {
    id: 2, kind: 'gray', muted: true, color: '#757575', axis: '#846f72', volume: 55, split: 73,
    waves: [buildWave({ ...vocal, mid: 43, up: 9, down: 9, seed: 1 }), buildWave({ ...vocal, mid: 103, up: 11, down: 12, seed: 3 })]
  },
  {
    id: 3, kind: 'green', clipped: true, color: '#4a7660', axis: '#5b7463', volume: 55, split: 73,
    waves: [buildWave({ ...band, mid: 43, seed: 5 }), buildWave({ ...band, mid: 103, seed: 9 })]
  },
  { id: 4 },
  { id: 5 },
  { id: 6 }
]
</script>

<style>
body {
  margin: 0;
  background: #121212;
}
</style>

<style scoped>
.sprite {
  position: absolute;
  width: 0;
  height: 0;
}

.app {
  display: flex;
  flex-direction: column;
  height: 100vh;
  overflow: hidden;
  background: #121212;
  color: #c6c6c6;
  font: 11px/16px "Open Sans", "Noto Sans CJK SC", sans-serif;
}

.app * {
  box-sizing: border-box;
}

svg {
  display: block;
  flex: none;
}

button,
select,
input {
  margin: 0;
  padding: 0;
  border: 0;
  background: none;
  color: inherit;
  font: inherit;
}

button {
  display: flex;
  align-items: center;
  justify-content: center;
  flex: none;
}

hr {
  height: 2px;
  margin: 0;
  border: 0;
  border-top: 1px solid #222;
  border-bottom: 1px solid #525252;
}

/* window chrome */
.titlebar {
  display: flex;
  align-items: center;
  height: 21px;
  padding: 1px 1px 0 2px;
  background: #fff;
  color: #000;
  font-size: 13px;
}

.logo {
  width: 16px;
  height: 16px;
  margin-right: 5px;
  border: 1px solid #2c9a73;
  background: #0b3a30;
  color: #3fe0a5;
  font-size: 9px;
  font-weight: 700;
  line-height: 13px;
  text-align: center;
}

.window-buttons {
  display: flex;
  margin-left: auto;
}

.window-buttons button {
  width: 46px;
  height: 20px;
}

.menubar {
  display: flex;
  gap: 1px;
  height: 22px;
  border-bottom: 2px solid #f0f0f0;
  background: #fff;
  color: #000;
  font-size: 12px;
}

.menubar button {
  padding: 4px 7px 0;
}

/* toolbar */
.toolbar {
  display: flex;
  align-items: center;
  height: 25px;
  margin-bottom: 3px;
  padding: 0 5px;
  background: #414141;
}

.grip {
  width: 4px;
  height: 11px;
}

.toolbar .grip {
  margin-right: 3px;
}

.view-switch {
  display: flex;
  height: 20px;
  border: 1px solid #161616;
}

.view-switch button {
  width: 63px;
  gap: 7px;
  border: 1px solid #5c5c5c;
  background: linear-gradient(#575757, #484848);
}

.view-switch button.pressed {
  width: 85px;
}

button.pressed {
  border-color: #1c1c1c;
  background: #2b2b2b;
}

.swoosh {
  width: 43px;
  height: 25px;
}

.tools {
  display: flex;
  align-items: center;
  gap: 3px;
}

.tools button {
  width: 24px;
  height: 22px;
}

.tools .pressed {
  width: 22px;
  margin-right: 1px;
  border: 1px solid #111;
}

.tools.dim {
  gap: 2px;
  margin-right: 7px;
}

.vline {
  width: 2px;
  height: 20px;
  margin-right: 7px;
  border-left: 1px solid #222;
  border-right: 1px solid #505050;
}

.workspace-label {
  margin-left: auto;
  margin-right: 6px;
}

.select {
  position: relative;
  height: 19px;
  border: 1px solid #161616;
  box-shadow: 0 1px 0 #555;
  background: linear-gradient(#515151, #414141);
}

.select select {
  display: block;
  width: 100%;
  height: 17px;
  padding: 0 20px 0 5px;
  border: 1px solid #5b5b5b;
  appearance: none;
  line-height: 15px;
}

.select::before {
  content: "";
  position: absolute;
  top: 3px;
  right: 17px;
  height: 11px;
  border-left: 1px solid #222;
}

.select::after {
  content: "";
  position: absolute;
  top: 6px;
  right: 4px;
  border: 4px solid transparent;
  border-top: 5px solid #c0c0c0;
  border-bottom: 0;
}

.select.workspace {
  width: 138px;
  margin-right: 7px;
}

.search {
  position: relative;
  height: 18px;
}

.search svg {
  position: absolute;
  top: 3px;
  left: 3px;
}

.search input {
  display: block;
  width: 100%;
  height: 18px;
  padding-left: 22px;
  border: 1px solid #0c0c0c;
  background: #a0a0a0;
}

.search.help {
  width: 192px;
  font-size: 13px;
}

.search input::placeholder {
  color: #1a1a1a;
}

/* panels */
.workspace-grid {
  display: grid;
  grid-template-columns: 485px minmax(0, 1fr);
  flex: 1;
  gap: 4px;
  min-height: 0;
  padding: 0 1px;
}

.column {
  display: flex;
  flex-direction: column;
  gap: 5px;
  min-width: 0;
  min-height: 0;
}

.panel {
  display: flex;
  flex-direction: column;
  min-height: 0;
}

.files {
  flex: 416 1 0;
}

.history {
  flex: 265 1 0;
}

.editor {
  flex: 1;
}

.tabs {
  display: flex;
  gap: 1px;
  flex: none;
  height: 19px;
}

.tab {
  position: relative;
  height: 18px;
  padding: 0 11px 2px;
  border: 1px solid #424242;
  border-bottom: 0;
  background: linear-gradient(#353535, #2c2c2c);
  color: #7d7d7d;
}

.tab.active {
  z-index: 1;
  gap: 4px;
  height: 20px;
  padding: 0 4px 3px 3px;
  border-color: #565656;
  background: linear-gradient(#4c4c4c, #404040);
  color: #c6c6c6;
}

.close {
  width: 5px;
  height: 5px;
}

.strip,
.strip-end {
  display: flex;
  align-items: center;
  justify-content: flex-end;
  height: 18px;
  padding-bottom: 2px;
  border: 1px solid #424242;
  border-bottom: 0;
  background: linear-gradient(#353535, #2c2c2c);
}

.strip {
  flex: 1;
  padding-right: 6px;
}

.strip-end {
  justify-content: center;
  width: 11px;
}

.body {
  display: flex;
  flex-direction: column;
  flex: 1;
  min-height: 0;
  border: 1px solid #565656;
  background: #404040;
}

/* file list */
.files .body {
  padding: 5px 4px 3px;
}

.file-tools {
  display: flex;
  align-items: center;
  gap: 11px;
  height: 21px;
  margin-bottom: 2px;
  padding-left: 2px;
}

.file-tools .search {
  width: 196px;
  margin-left: auto;
}

.file-box {
  flex: 1;
  overflow: hidden;
  border: 1px solid #0c0c0c;
  border-bottom: 0;
}

.file-box table {
  width: 100%;
  table-layout: fixed;
  border-collapse: collapse;
  white-space: nowrap;
}

.c-name {
  width: 181px;
}

.c-state {
  width: 40px;
}

.c-time {
  width: 102px;
}

.c-rate {
  width: 75px;
}

.c-chan {
  width: 61px;
}

.file-box th {
  height: 19px;
  padding: 0 0 0 5px;
  border-bottom: 1px solid #111;
  background: linear-gradient(#505050, #414141);
  font-weight: 400;
  text-align: left;
  overflow: hidden;
}

.file-box th + th {
  background: linear-gradient(#222, #222) 0 5px / 1px 10px no-repeat, linear-gradient(#505050, #414141);
}

.file-box th.sorted {
  background: conic-gradient(from 135deg at 50% 0, #8d8d8d 90deg, transparent 0) 165px 7px / 12px 6px no-repeat, linear-gradient(#505050, #414141);
}

.file-box td {
  height: 19px;
  padding: 0 0 0 8px;
  border-bottom: 1px solid #363636;
  overflow: hidden;
}

.file-box td:first-child {
  padding-left: 26px;
}

.file-box td:nth-child(3) {
  padding-left: 16px;
}

.file-box td svg {
  display: inline-block;
  margin-right: 6px;
  vertical-align: -2px;
}

.file-box .project td svg {
  margin: 0 7px 0 1px;
  vertical-align: -1px;
}

.file-box .selected td {
  background: #4c4c4c;
}

.file-box .project td {
  color: #d0bb85;
  font-weight: 700;
}

.hscroll {
  display: flex;
  align-items: center;
  justify-content: space-between;
  height: 13px;
  padding: 0 4px;
  border: 1px solid #0c0c0c;
  background: #383838;
}

.rail {
  flex: 1;
  margin: 0 6px;
}

.hscroll .thumb {
  width: 36%;
  height: 11px;
  border: 1px solid #555;
  border-right-color: #111;
  background: #454545;
}

.tri {
  flex: none;
  width: 0;
  height: 0;
  border: 4px solid transparent;
}

.tri.left {
  border-right: 5px solid #c2c2c2;
  border-left: 0;
}

.tri.right {
  border-left: 5px solid #c2c2c2;
  border-right: 0;
}

.tri.up {
  border-bottom: 5px solid #b0b0b0;
  border-top: 0;
}

.tri.down {
  border-top: 5px solid #b0b0b0;
  border-bottom: 0;
}

.preview {
  display: flex;
  justify-content: center;
  gap: 4px;
  padding: 4px 0 1px;
}

.btn {
  width: 26px;
  height: 23px;
  border: 1px solid #141414;
  box-shadow: inset 0 0 0 1px #5b5b5b, 0 0 0 1px #484848;
  background: linear-gradient(#525252, #444);
}

.btn.pressed {
  box-shadow: 0 0 0 1px #484848;
  background: #2b2b2b;
}

.btn:disabled {
  border-color: #303030;
  box-shadow: inset 0 0 0 1px #494949, 0 0 0 1px #454545;
  background: #424242;
}

/* effects rack */
.rack .body {
  padding: 4px 4px 3px;
}

.switch {
  display: flex;
  align-self: center;
  height: 18px;
  margin-bottom: 5px;
  border: 1px solid #161616;
}

.switch button {
  width: 61px;
  border: 1px solid #5c5c5c;
  background: linear-gradient(#555, #464646);
}

.switch .pressed {
  border-color: #1c1c1c;
  background: #2b2b2b;
}

.preset {
  display: flex;
  align-items: center;
  margin: 4px 0 5px;
}

.preset .select {
  flex: 1;
  margin: 0 8px 0 5px;
}

.preset button {
  margin-right: 10px;
}

.preset button:last-child {
  margin-right: 3px;
}

.rack-track {
  margin-bottom: 7px;
  font-weight: 700;
}

.slots {
  display: flex;
  height: 33px;
  border: 1px solid #0c0c0c;
  overflow: hidden;
}

.slot-rows {
  flex: 1;
  height: 100%;
  overflow: hidden;
}

.slot {
  display: flex;
  align-items: center;
  height: 19px;
  padding-right: 6px;
  border-bottom: 1px solid #333;
}

.slot > span {
  width: 20px;
  height: 18px;
  margin-right: 2px;
  border-right: 1px solid #333;
  line-height: 18px;
  text-align: center;
}

.slot .tri {
  margin-left: auto;
}

.slot .tri.right {
  border-width: 5px 0 5px 5px;
}

.mini {
  width: 15px;
  height: 15px;
  border: 1px solid #1a1a1a;
  box-shadow: inset 0 0 0 1px #505050;
  background: #464646;
}

.vscroll {
  display: flex;
  flex-direction: column;
  align-items: center;
  justify-content: space-between;
  width: 13px;
  padding: 4px 0;
  border-left: 1px solid #111;
  background: #383838;
}

.level {
  display: flex;
  align-items: center;
  height: 17px;
  margin-top: 7px;
}

.faded {
  display: flex;
  align-items: center;
  gap: 4px;
  width: 125px;
  padding-left: 5px;
  opacity: .32;
}

.dotted,
.percent u {
  border-bottom: 1px dotted;
  line-height: 13px;
  text-decoration: none;
}

.meter {
  display: flex;
  flex: 1;
  justify-content: space-between;
  height: 17px;
  margin-right: 7px;
  border: 1px solid #686868;
  background: #000;
}

.meter i {
  width: 1px;
  margin-left: 1px;
  background: #f0f000;
}

.meter b {
  width: 9px;
  border-left: 1px solid #686868;
  background: linear-gradient(#686868, #686868) 0 7px / 100% 1px no-repeat;
}

.db-scale {
  position: relative;
  height: 18px;
  margin: 0 18px 7px 127px;
}

.db-scale i {
  position: absolute;
  top: 0;
  width: 1px;
  height: 2px;
  background: #b0b0b0;
}

.db-scale i.major {
  height: 4px;
}

.db-scale span {
  position: absolute;
  top: 3px;
  font-size: 10px;
  transform: translateX(-50%);
}

.db-scale span:nth-of-type(1) {
  transform: translateX(-2px);
}

.mix {
  display: flex;
  align-items: center;
  gap: 8px;
  margin-bottom: 6px;
  padding: 0 7px 0 5px;
  color: #686868;
}

.mix input {
  flex: 1;
  height: 12px;
  appearance: none;
}

.mix input::-webkit-slider-runnable-track {
  height: 4px;
  border: 1px solid #2b2b2b;
  background: #3a3a3a;
}

.mix input::-webkit-slider-thumb {
  width: 8px;
  height: 9px;
  margin-top: -5px;
  border: 1px solid #333;
  border-radius: 4px 4px 0 0;
  background: #505050;
  appearance: none;
}

.percent {
  margin-left: 8px;
}

.rack-buttons {
  display: flex;
  gap: 4px;
  margin-top: 4px;
}

.rack-buttons .btn {
  width: 19px;
  height: 18px;
}

.rack-buttons .btn:first-child {
  width: 17px;
}

/* editor */
.editor .tab {
  display: flex;
  align-items: center;
  gap: 3px;
  padding-bottom: 2px;
  border-color: #d0980f;
  background: #404040;
}

.editor .tab .select {
  width: 135px;
  height: 16px;
  margin-right: 2px;
}

.editor .tab .select select {
  height: 14px;
  line-height: 12px;
}

.editor .tab .select::before {
  top: 2px;
}

.editor .tab .select::after {
  top: 5px;
}

.editor .body {
  padding: 8px 7px 0 6px;
  border-color: #d0980f;
}

.overview-row {
  display: flex;
  align-items: center;
  height: 29px;
  margin-bottom: 16px;
}

.overview {
  position: relative;
  display: flex;
  flex: 1;
  flex-direction: column;
  gap: 1px;
  height: 29px;
  padding: 3px 1px;
  border: 1px solid #111;
  border-bottom-color: #555;
  background: #000;
}

.clip-line {
  height: 2px;
  background: #4a7662;
}

.view-window {
  position: absolute;
  top: 0;
  left: 7.1%;
  display: flex;
  align-items: center;
  justify-content: space-between;
  width: 7.1%;
  height: 27px;
  border: 1px solid #c8930f;
  background: linear-gradient(#9999995c, #b4b4b470 40%, #77777790);
}

.view-window i {
  width: 6px;
  height: 100%;
  background: linear-gradient(90deg, #a87a12, #c8a858 50%, #a87a12);
}

.view-window span {
  width: 8px;
  height: 7px;
  background: repeating-linear-gradient(90deg, #c8c8c8 0 1px, transparent 1px 2px);
}

.overview-row button {
  width: 35px;
  padding-left: 5px;
}

.time-row {
  display: flex;
  height: 27px;
  padding-right: 13px;
}

.track-tools {
  display: flex;
  align-items: center;
  width: 223px;
  padding: 0 8px 5px 0;
}

.joined {
  display: flex;
  margin-right: auto;
  border: 1px solid #181818;
}

.joined button {
  width: 21px;
  height: 18px;
  border: 1px solid #5c5c5c;
  background: linear-gradient(#555, #464646);
}

.joined button.pressed {
  border-color: #202020;
  background: #2b2b2b;
}

.plain {
  width: 20px;
  height: 20px;
}

.plain.pressed {
  margin-left: 2px;
  border: 1px solid #111;
}

.ruler {
  position: relative;
  flex: 1;
  border: 1px solid #181818;
  box-shadow: 0 -1px 0 #505050;
  background: #3a3a3a;
}

.ruler span {
  position: absolute;
  top: 2px;
  font-size: 10px;
  transform: translateX(-50%);
}

.ruler span.unit {
  left: 2px;
  font-size: 11px;
  transform: none;
}

.ruler i {
  position: absolute;
  bottom: 0;
  width: 1px;
  height: 5px;
  background: #b8b8b8;
}

.ruler i.major {
  height: 8px;
}

.hover-mark {
  position: absolute;
  top: 0;
  bottom: 0;
  left: 10.5%;
  width: 1px;
  background: #7a5c14;
}

.marker {
  position: absolute;
  bottom: 0;
  left: 97.63%;
  width: 11px;
  height: 14px;
  margin-left: -5px;
}

.session {
  display: flex;
  flex: 1;
  min-height: 0;
  border-bottom: 1px solid #1c1c1c;
  box-shadow: 0 1px 0 #555;
}

.tracks {
  position: relative;
  flex: 1;
  min-width: 0;
  overflow: hidden;
  background: #121212;
}

.track {
  display: flex;
  height: 134px;
  margin-bottom: 3px;
}

.head {
  display: flex;
  gap: 5px;
  width: 222px;
  padding: 6px 4px 6px 6px;
  border: 1px solid #585858;
  background: #404040;
}

.current .head {
  background: #4b4b4b;
}

.controls {
  display: flex;
  flex: 1;
  flex-direction: column;
}

.line {
  display: flex;
  align-items: center;
  gap: 5px;
  height: 18px;
}

.title > svg + svg {
  margin-right: -1px;
}

.name {
  margin-right: auto;
}

.key {
  width: 17px;
  height: 18px;
  border: 1px solid #161616;
  box-shadow: inset 0 0 0 1px #5a5a5a;
  background: #4a4a4a;
  color: #dcdcdc;
  font-size: 10px;
}

.key.muted {
  background: linear-gradient(#5af0ae, #36b47c);
  box-shadow: none;
}

.key.off {
  border-color: #333;
  box-shadow: none;
  background: none;
  color: #777;
}

.dials {
  margin: 6px 0 3px;
}

.value {
  border-bottom: 1px dotted;
  color: #cc9714;
  line-height: 13px;
}

.value.volume {
  margin-right: auto;
}

.dials .key {
  margin-left: 24px;
}

.fx-box {
  border: 1px solid #111;
  box-shadow: 0 0 0 1px #555;
  background: #404040;
}

.current .fx-box {
  background: #444;
}

.fx-row {
  display: flex;
  align-items: center;
  gap: 5px;
  height: 21px;
  padding: 0 3px 0 4px;
}

.fx-row .last {
  margin-left: auto;
}

.fx-box .slots {
  height: 29px;
  border-width: 1px 0 0;
  background: #404040;
}

.mode {
  height: 19px;
  margin-top: 5px;
}

.mode .tri {
  margin: 0 5px 0 3px;
}

.mode .select {
  flex: 1;
}

.side {
  display: flex;
  flex-direction: column;
  width: 17px;
}

.vu {
  display: flex;
  flex: 1;
  flex-direction: column;
  justify-content: space-between;
  margin-top: 11px;
  border: 1px solid #5a5a5a;
  background: #000;
}

.clip-leds {
  display: flex;
  height: 9px;
  border-bottom: 1px solid #5a5a5a;
}

.clip-leds i {
  flex: 1;
}

.clip-leds i + i {
  border-left: 1px solid #5a5a5a;
}

.clip-leds .hot {
  background: #fa4848;
}

.floor {
  display: flex;
  gap: 1px;
}

.floor i {
  flex: 1;
  height: 1px;
  background: #f0f000;
}

.lane {
  flex: 1;
  min-width: 0;
  margin-left: 1px;
  background: #383838;
}

.lane svg {
  width: 100%;
  height: 134px;
}

.lane.active {
  background:
    linear-gradient(#d4e0da, #7ca391 35%, #2f6c52 95%) 0 0 / 100% 14px no-repeat,
    linear-gradient(#9fd0d8, #9fd0d8) 0 14px / 100% 1px no-repeat,
    linear-gradient(#3f5f72, #3f5f72) 0 15px / 100% 1px no-repeat,
    linear-gradient(#444, #8c8c8c) 0 100% / 100% 4px no-repeat,
    #262626;
}

.lane.gray {
  background:
    linear-gradient(#343434, #343434) 0 0 / 100% 14px no-repeat,
    linear-gradient(#6a8790, #50606c) 0 14px / 100% 2px no-repeat,
    #424242;
}

.lane.green {
  background:
    linear-gradient(#1d3229, #1d3229) 0 0 / 100% 14px no-repeat,
    linear-gradient(#5a8088, #5a8088) 0 100% / 100% 1px no-repeat,
    #2c4037;
}

.playhead-area {
  position: absolute;
  top: 0;
  right: 0;
  bottom: 0;
  left: 223px;
}

.playhead-area i {
  position: absolute;
  left: 97.63%;
  width: 1px;
  height: 100%;
  background: #b40000;
}

.track-scroll {
  display: flex;
  flex-direction: column;
  align-items: center;
  width: 13px;
  padding: 4px 0 3px;
  border: 1px solid #161616;
  background: #383838;
}

.track-scroll .thumb {
  flex: 526;
  width: 11px;
  margin-top: 5px;
  border: 1px solid #545454;
  box-shadow: 0 -1px 0 #111, 0 1px 0 #111;
  background: #444;
}

.track-scroll .rest {
  flex: 172;
}

.footer {
  display: flex;
  align-items: center;
  justify-content: space-between;
  height: 35px;
  padding: 2px 5px 0 0;
}

.clock {
  width: 117px;
  padding: 2px 0 0 4px;
  color: #cc9714;
  font-size: 16px;
  line-height: 18px;
}

.clock span {
  border-bottom: 1px dotted;
}

.transport {
  display: flex;
  gap: 4px;
}

.zooms {
  display: flex;
  align-items: center;
  gap: 10px;
}

.zooms button {
  width: 20px;
}

/* selection and view */
.selection table {
  border-spacing: 0;
  margin: 1px 0 4px 10px;
}

.selection .body {
  display: block;
}

.selection th {
  padding: 0;
  font-weight: 400;
  text-align: left;
}

.selection thead th {
  height: 16px;
  min-width: 27px;
}

.selection tbody th {
  width: 27px;
}

.selection thead th + th,
.selection td {
  width: 69px;
}

.selection td {
  height: 20px;
  padding: 0 0 0 2px;
  color: #cc9714;
}

.selection td span {
  border-bottom: 1px dotted;
}

/* bottom bars */
.statusbar {
  display: flex;
  align-items: center;
  height: 20px;
  margin-top: 2px;
  padding: 0 6px 0 8px;
  border: 1px solid #555;
  border-width: 1px 1px 1px 0;
  background: #404040;
}

.state {
  margin-right: auto;
}

.cell {
  height: 13px;
  padding-left: 8px;
  border-left: 1px solid #1c1c1c;
  line-height: 13px;
  white-space: nowrap;
}

.cell small {
  font-size: 6px;
  vertical-align: 1px;
}

.gap-a {
  width: 50px;
}

.gap-b {
  width: 79px;
}

.rate {
  width: 121px;
}

.size {
  width: 67px;
}

.length {
  width: 65px;
  padding-left: 16px;
}

.free {
  width: 83px;
}

.tail {
  width: 42px;
}

.taskbar {
  display: flex;
  flex: none;
  justify-content: space-between;
  height: 8px;
  padding: 0 75px 0 442px;
  overflow: hidden;
  background: linear-gradient(90deg, #34352b, #44453a 20%, #33361f 26%, #3b3c3c 35%, #34372a 48%, #2a2c24 70%, #453a35 86%, #3a3e2c 92%, #454840);
  color: #fff;
  font-size: 12px;
}

.task {
  width: 48px;
  background: #686a5c;
}

.taskbar span {
  padding-top: 3px;
}
</style>
